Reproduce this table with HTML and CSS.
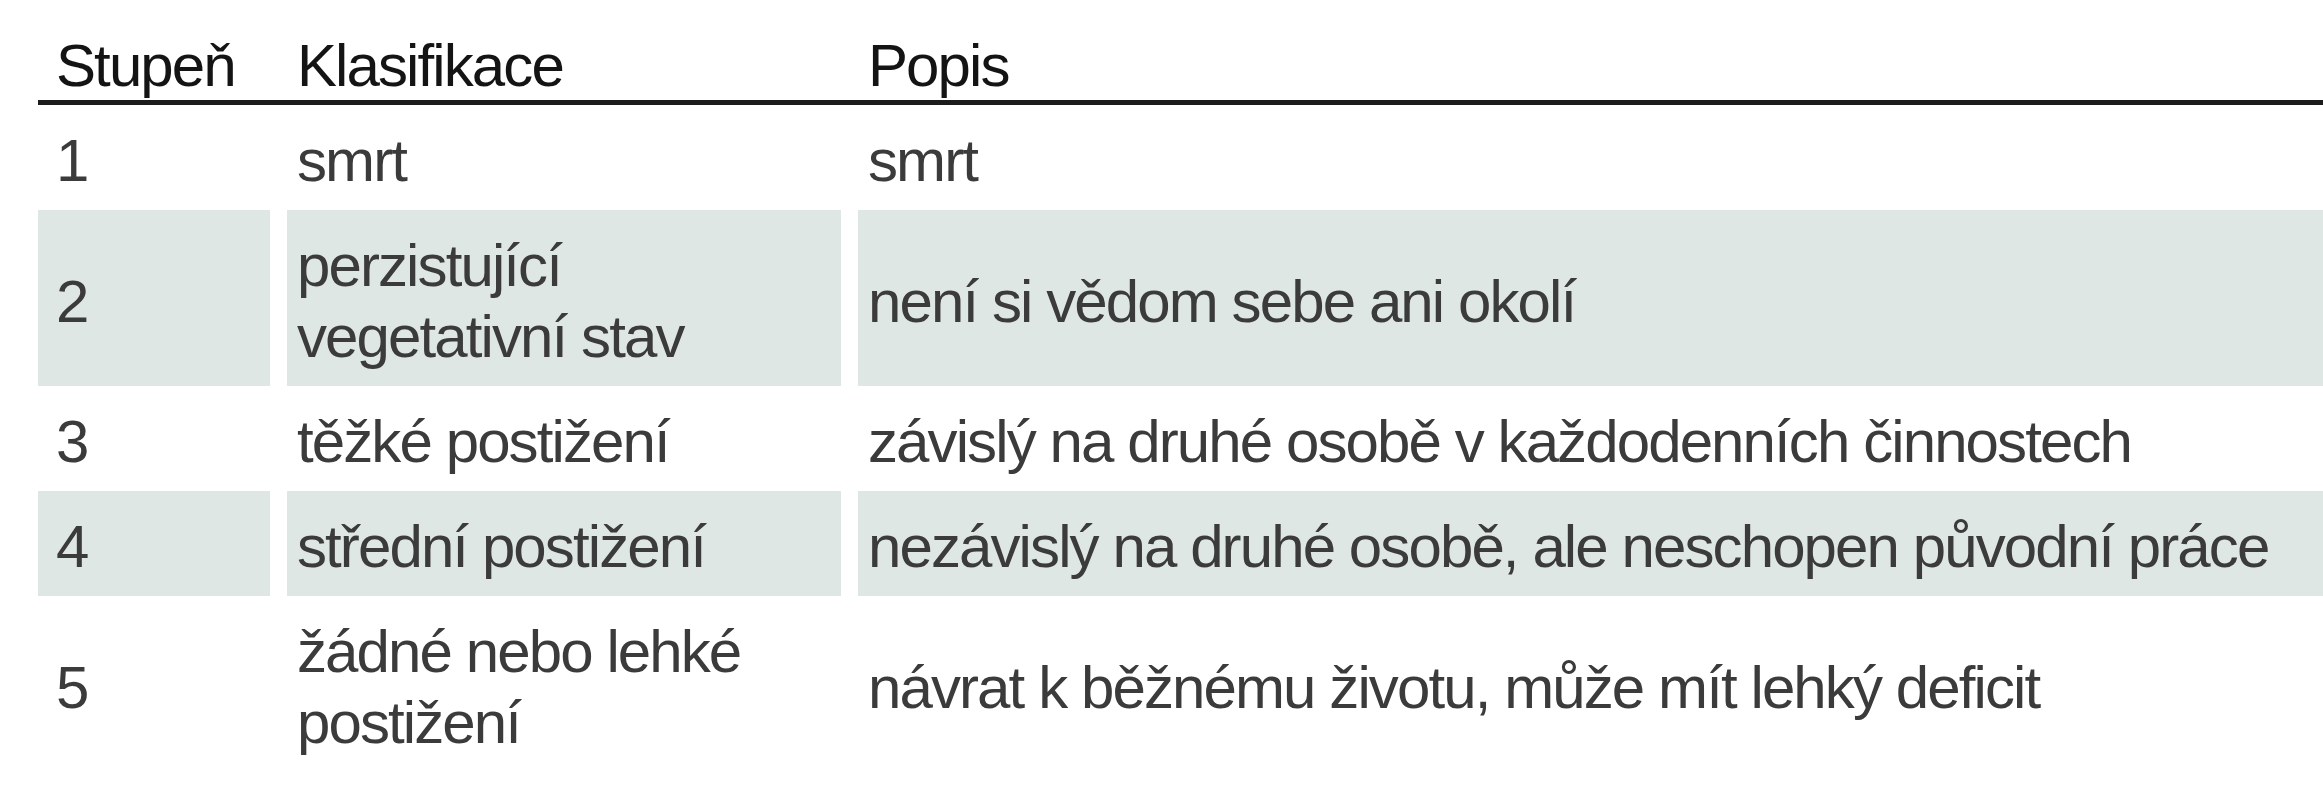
FILE: index.html
```html
<!DOCTYPE html>
<html lang="cs">
<head>
<meta charset="utf-8">
<title>Stupně</title>
<link rel="stylesheet" href="styles.css">
</head>
<body>
<div class="table">
  <div class="row head">
    <div class="cell c1">Stupeň</div>
    <div class="cell c2">Klasifikace</div>
    <div class="cell c3">Popis</div>
  </div>
  <div class="row">
    <div class="cell c1">1</div>
    <div class="cell c2">smrt</div>
    <div class="cell c3">smrt</div>
  </div>
  <div class="row shade">
    <div class="cell c1">2</div>
    <div class="cell c2">perzistující<br>vegetativní stav</div>
    <div class="cell c3">není si vědom sebe ani okolí</div>
  </div>
  <div class="row">
    <div class="cell c1">3</div>
    <div class="cell c2">těžké postižení</div>
    <div class="cell c3">závislý na druhé osobě v každodenních činnostech</div>
  </div>
  <div class="row shade">
    <div class="cell c1">4</div>
    <div class="cell c2">střední postižení</div>
    <div class="cell c3">nezávislý na druhé osobě, ale neschopen původní práce</div>
  </div>
  <div class="row">
    <div class="cell c1">5</div>
    <div class="cell c2">žádné nebo lehké<br>postižení</div>
    <div class="cell c3">návrat k běžnému životu, může mít lehký deficit</div>
  </div>
</div>
</body>
</html>
```
FILE: styles.css
```css
html, body {
  margin: 0;
  padding: 0;
  background: #ffffff;
}

body {
  font-family: "Liberation Sans", Arial, sans-serif;
  font-size: 60px;
  letter-spacing: -1.9px;
  color: #3b3b3b;
  overflow: hidden;
}

.table {
  margin-left: 38px;
  display: flex;
  flex-direction: column;
}

.row {
  display: grid;
  grid-template-columns: 232px 554px 1fr;
  column-gap: 17px;
}

.cell {
  display: flex;
  align-items: center;
  line-height: 71px;
  padding: 20px 10px 14px 10px;
  white-space: nowrap;
}

.cell.c1 {
  padding-left: 18px;
}

.row.head {
  border-bottom: 5px solid #1c1c1c;
}

.row.head .cell {
  line-height: 68px;
  padding-top: 32px;
  padding-bottom: 0;
  color: #141414;
}

.row.shade .cell {
  background: #dfe7e5;
}
```
